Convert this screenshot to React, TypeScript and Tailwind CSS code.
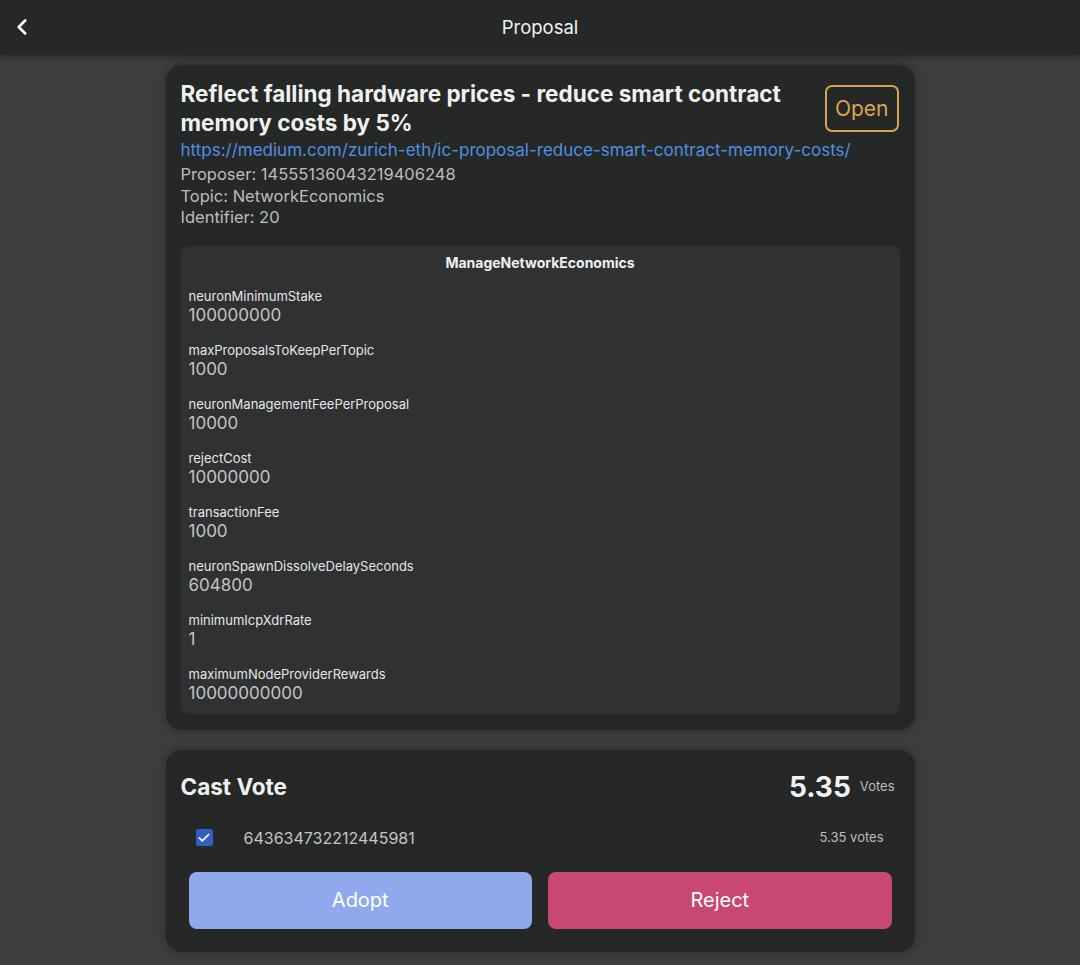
import { ChevronLeft, Check } from "lucide-react";

const params = [
  { name: "neuronMinimumStake", value: "100000000" },
  { name: "maxProposalsToKeepPerTopic", value: "1000" },
  { name: "neuronManagementFeePerProposal", value: "10000" },
  { name: "rejectCost", value: "10000000" },
  { name: "transactionFee", value: "1000" },
  { name: "neuronSpawnDissolveDelaySeconds", value: "604800" },
  { name: "minimumIcpXdrRate", value: "1" },
  { name: "maximumNodeProviderRewards", value: "10000000000" },
];

export default function App() {
  return (
    <div
      className="min-h-[965px] w-[1080px] bg-[#3c3d3d] text-[#e8e8e8]"
      style={{ fontFamily: "Inter, 'Noto Sans', sans-serif" }}
    >
      {/* Header */}
      <header className="relative flex h-[55px] items-center justify-center bg-[#262727] shadow-[0_2px_6px_rgba(0,0,0,0.35)]">
        <button className="absolute left-[9px] top-[14px] text-white">
          <ChevronLeft size={26} strokeWidth={2.4} />
        </button>
        <h1 className="text-[18.5px] text-[#f2f2f2]">Proposal</h1>
      </header>

      <main className="mx-auto flex w-[749px] flex-col gap-[20px] pt-[10px] pb-[14px]">
        {/* Proposal card */}
        <section className="rounded-[16px] bg-[#262727] px-[15px] pt-[14px] pb-[16px] shadow-[0_0_10px_rgba(0,0,0,0.3)]">
          <div className="flex items-start justify-between gap-4">
            <h2 className="text-[22.5px] font-bold leading-[29px] text-[#f0f0f0]">
              Reflect falling hardware prices - reduce smart contract memory costs by 5%
            </h2>
            <span className="mt-[6px] mr-[1px] shrink-0 rounded-[7px] border-2 border-[#d7a650] px-[8px] py-[7px] text-[21px] leading-[29px] text-[#d7a650]">
              Open
            </span>
          </div>
          <a className="mt-[2px] block text-[17px] leading-[23px] text-[#4f8fe0]">
            https://medium.com/zurich-eth/ic-proposal-reduce-smart-contract-memory-costs/
          </a>
          <div className="mt-[2px] text-[16.5px] leading-[21.5px] text-[#bdbdbd]">
            <p>Proposer: 14555136043219406248</p>
            <p>Topic: NetworkEconomics</p>
            <p>Identifier: 20</p>
          </div>

          <div className="mt-[17px] rounded-[8px] bg-[#2f3132] px-[8px] pt-[8px] pb-[11px]">
            <h3 className="text-center text-[14px] font-bold leading-[18px] text-[#f0f0f0]">
              ManageNetworkEconomics
            </h3>
            <div className="mt-[15px] flex flex-col gap-[16px]">
              {params.map((p) => (
                <div key={p.name}>
                  <div className="text-[13px] leading-[18px] text-[#e6e6e6]">{p.name}</div>
                  <div className="text-[17px] leading-[20px] text-[#c4c4c4]">{p.value}</div>
                </div>
              ))}
            </div>
          </div>
        </section>

        {/* Vote card */}
        <section className="rounded-[16px] bg-[#262727] px-[15px] pt-[16px] pb-[23px] shadow-[0_0_10px_rgba(0,0,0,0.3)]">
          <div className="flex items-center justify-between pr-[5px]">
            <h2 className="text-[22.5px] font-bold text-[#f0f0f0]">Cast Vote</h2>
            <div className="flex items-center gap-[9px]">
              <span className="text-[28px] font-bold text-[#f2f2f2]">5.35</span>
              <span className="text-[13px] text-[#bdbdbd]">Votes</span>
            </div>
          </div>
          <div className="mt-[18px] flex items-center pl-[15px] pr-[16px]">
            <span className="flex h-[17px] w-[17px] items-center justify-center rounded-[2px] bg-[#2f60c0]">
              <Check size={14} strokeWidth={3} className="text-white" />
            </span>
            <span className="ml-[31px] text-[16px] text-[#c4c4c4]">643634732212445981</span>
            <span className="ml-auto text-[13px] text-[#bdbdbd]">5.35 votes</span>
          </div>
          <div className="mt-[22px] grid grid-cols-2 gap-[16px] px-[8px]">
            <button className="h-[57px] rounded-[8px] bg-[#8fa9ec] text-[20px] text-white">Adopt</button>
            <button className="h-[57px] rounded-[8px] bg-[#c84873] text-[20px] text-white">Reject</button>
          </div>
        </section>
      </main>
    </div>
  );
}
